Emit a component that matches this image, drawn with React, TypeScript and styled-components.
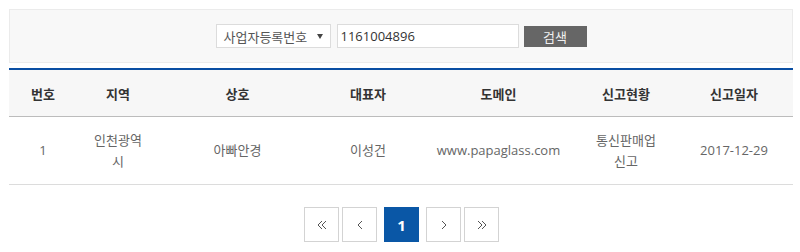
import React, { useState } from 'react';
import styled, { createGlobalStyle } from 'styled-components';

const GlobalStyle = createGlobalStyle`
  body {
    margin: 0;
    background: #fff;
    font-family: "Open Sans", "Noto Sans CJK KR", sans-serif;
  }
`;

/* PAGE */
const Page = styled.div`
  padding: 9px 7px 0 9px;
`;

/* SEARCH */
const SearchPanel = styled.form`
  height: 52px;
  display: flex;
  align-items: center;
  justify-content: center;
  gap: 5px;
  background: #f8f8f8;
  border: 1px solid #ebebeb;
  margin-bottom: 5px;
`;

const SelectBox = styled.div`
  width: 115px;
  height: 24px;
  box-sizing: border-box;
  display: flex;
  align-items: center;
  justify-content: space-between;
  padding: 0 5px 0 7px;
  background: #fff;
  border: 1px solid #dcdcdc;
  color: #555;
  font-size: 13px;
  margin-right: 1px;
`;

const Caret = styled.span`
  width: 0;
  height: 0;
  border-left: 3px solid transparent;
  border-right: 3px solid transparent;
  border-top: 5px solid #444;
  margin-right: 2px;
`;

const Input = styled.input`
  width: 182px;
  height: 24px;
  box-sizing: border-box;
  padding: 0 3px;
  border: 1px solid #dcdcdc;
  font-family: "Open Sans", "Noto Sans CJK KR", sans-serif;
  font-size: 13px;
  color: #333;
  outline: none;
`;

const SearchButton = styled.button`
  width: 63px;
  height: 21px;
  border: none;
  background: #666;
  color: #f0f0f0;
  font-family: "Noto Sans CJK KR", sans-serif;
  font-size: 13px;
  padding: 0;
  cursor: pointer;
`;

/* TABLE */
const Table = styled.table`
  width: 784px;
  border-collapse: collapse;
  table-layout: fixed;
  border-top: 2px solid #0a4ea3;
  font-size: 13px;
`;

const Th = styled.th`
  height: 46px;
  background: #f7f7f7;
  border-bottom: 1px solid #bcbcbc;
  color: #333;
  font-family: "Noto Sans CJK KR", sans-serif;
  font-weight: 700;
  padding: 0 12px;
`;

const Td = styled.td`
  height: 67px;
  border-bottom: 1px solid #dcdcdc;
  color: #666;
  text-align: center;
  line-height: 21px;
  padding: 0 12px;
`;

/* PAGINATION */
const Pager = styled.nav`
  display: flex;
  justify-content: center;
  margin-top: 22px;
  margin-right: -1px;
`;

const PagerGroup = styled.div`
  display: flex;
  gap: 3px;
`;

const PageButton = styled.button<{ $active?: boolean }>`
  width: 35px;
  height: 35px;
  box-sizing: border-box;
  display: flex;
  align-items: center;
  justify-content: center;
  padding: 0;
  margin: ${(p) => (p.$active ? '0 7px' : '0')};
  border: 1px solid ${(p) => (p.$active ? '#0a57a6' : '#d3d3d3')};
  background: ${(p) => (p.$active ? '#0a57a6' : '#fff')};
  color: ${(p) => (p.$active ? '#fff' : '#555')};
  font-family: "Open Sans", sans-serif;
  font-size: 15px;
  font-weight: 700;
  cursor: pointer;
`;

const Chevron: React.FC<{ dir: 'left' | 'right'; double?: boolean }> = ({ dir, double }) => {
  const one = dir === 'left' ? 'M5 1 L1 5 L5 9' : 'M1 1 L5 5 L1 9';
  return (
    <svg width={double ? 10 : 6} height="10" viewBox={double ? '0 0 10 10' : '0 0 6 10'}>
      <path d={one} fill="none" stroke="#555" strokeWidth="1" />
      {double && <path d={one} transform="translate(4 0)" fill="none" stroke="#555" strokeWidth="1" />}
    </svg>
  );
};

const columns = [
  { label: '번호', width: 68 },
  { label: '지역', width: 82 },
  { label: '상호', width: 157 },
  { label: '대표자', width: 104 },
  { label: '도메인', width: 157 },
  { label: '신고현황', width: 98 },
  { label: '신고일자', width: 118 },
];

const rows = [['1', '인천광역시', '아빠안경', '이성건', 'www.papaglass.com', '통신판매업 신고', '2017-12-29']];

const App: React.FC = () => {
  const [query, setQuery] = useState('1161004896');

  return (
    <Page>
      <GlobalStyle />
      <SearchPanel onSubmit={(e) => e.preventDefault()}>
        <SelectBox>
          사업자등록번호 <Caret />
        </SelectBox>
        <Input value={query} onChange={(e) => setQuery(e.target.value)} />
        <SearchButton type="submit">검색</SearchButton>
      </SearchPanel>

      <Table>
        <colgroup>
          {columns.map((c) => (
            <col key={c.label} style={{ width: c.width }} />
          ))}
        </colgroup>
        <thead>
          <tr>
            {columns.map((c) => (
              <Th key={c.label}>{c.label}</Th>
            ))}
          </tr>
        </thead>
        <tbody>
          {rows.map((r) => (
            <tr key={r[0]}>
              {r.map((v, i) => (
                <Td key={i}>{v}</Td>
              ))}
            </tr>
          ))}
        </tbody>
      </Table>

      <Pager>
        <PagerGroup>
          <PageButton><Chevron dir="left" double /></PageButton>
          <PageButton><Chevron dir="left" /></PageButton>
        </PagerGroup>
        <PageButton $active>1</PageButton>
        <PagerGroup>
          <PageButton><Chevron dir="right" /></PageButton>
          <PageButton><Chevron dir="right" double /></PageButton>
        </PagerGroup>
      </Pager>
    </Page>
  );
};

export default App;
